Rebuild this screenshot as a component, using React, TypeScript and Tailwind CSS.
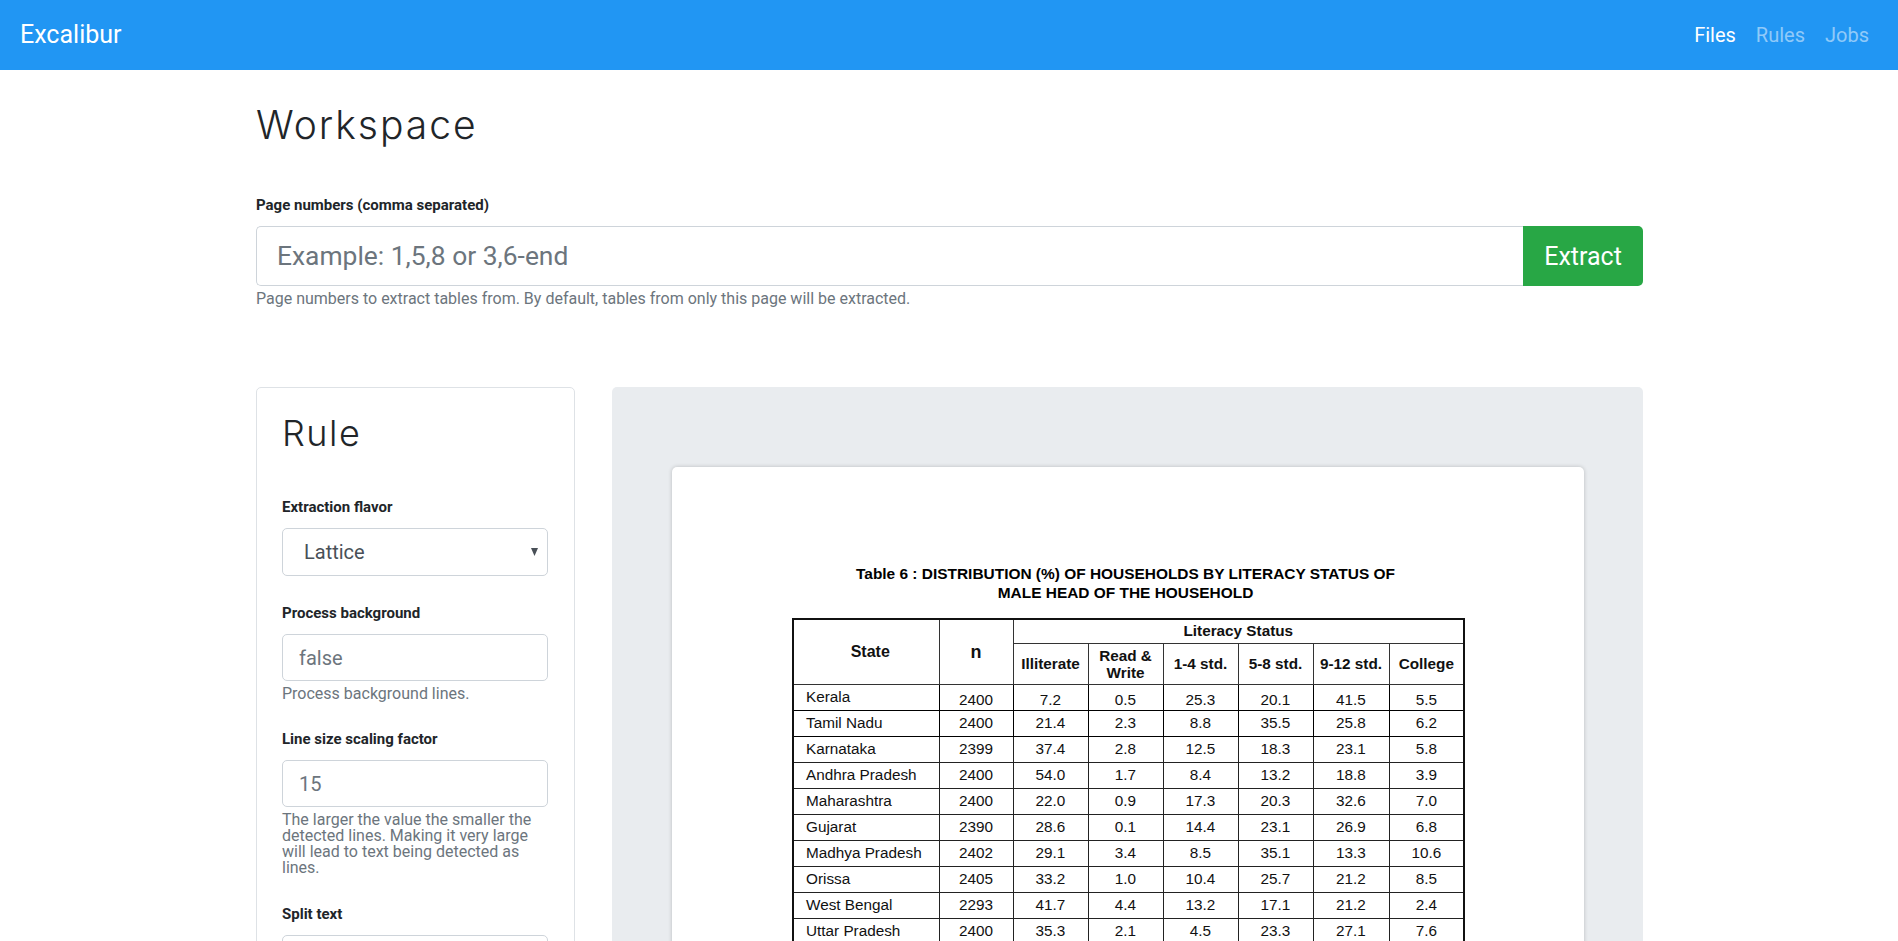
import React from 'react';

const rows = [
  ['Kerala', '2400', '7.2', '0.5', '25.3', '20.1', '41.5', '5.5'],
  ['Tamil Nadu', '2400', '21.4', '2.3', '8.8', '35.5', '25.8', '6.2'],
  ['Karnataka', '2399', '37.4', '2.8', '12.5', '18.3', '23.1', '5.8'],
  ['Andhra Pradesh', '2400', '54.0', '1.7', '8.4', '13.2', '18.8', '3.9'],
  ['Maharashtra', '2400', '22.0', '0.9', '17.3', '20.3', '32.6', '7.0'],
  ['Gujarat', '2390', '28.6', '0.1', '14.4', '23.1', '26.9', '6.8'],
  ['Madhya Pradesh', '2402', '29.1', '3.4', '8.5', '35.1', '13.3', '10.6'],
  ['Orissa', '2405', '33.2', '1.0', '10.4', '25.7', '21.2', '8.5'],
  ['West Bengal', '2293', '41.7', '4.4', '13.2', '17.1', '21.2', '2.4'],
  ['Uttar Pradesh', '2400', '35.3', '2.1', '4.5', '23.3', '27.1', '7.6'],
];

const Field = ({ label, placeholder, help }: { label: string; placeholder: string; help?: string }) => (
  <div className="mb-[27px]">
    <label className="block text-[15px] leading-[21px] font-bold text-[#212529] mb-[10px]">{label}</label>
    <input
      placeholder={placeholder}
      className="block w-full h-[47px] px-[16px] text-[20px] bg-white border border-[#ced4da] rounded-[5px] placeholder:text-[#6c757d]"
    />
    {help && <p className="mt-[5px] text-[16px] leading-[16px] text-[#6c757d]">{help}</p>}
  </div>
);

const PdfTable = () => (
  <table className="table-fixed border-collapse border-2 border-[#111] w-[671px] ml-[120px] font-['Liberation_Sans',sans-serif] text-[15.3px] leading-[18px] text-[#111]">
    <colgroup>
      <col className="w-[146px]" />
      <col className="w-[74px]" />
      <col className="w-[75px]" />
      <col className="w-[75px]" />
      <col className="w-[75px]" />
      <col className="w-[75px]" />
      <col className="w-[76px]" />
      <col className="w-[75px]" />
    </colgroup>
    <thead className="font-bold">
      <tr className="h-[24px]">
        <th rowSpan={2} className="border border-[#333] text-[16px] pl-[8px]">State</th>
        <th rowSpan={2} className="border border-[#333] text-[18px]">n</th>
        <th colSpan={6} className="border border-[#333]">Literacy Status</th>
      </tr>
      <tr className="h-[41px]">
        {['Illiterate', 'Read & Write', '1-4 std.', '5-8 std.', '9-12 std.', 'College'].map((h) => (
          <th key={h} className="border border-[#333] px-[6px] leading-[17px]">{h}</th>
        ))}
      </tr>
    </thead>
    <tbody>
      {rows.map((r, ri) => (
        <tr key={r[0]} className={ri === 0 ? 'h-[26px]' : 'h-[26px]'}>
          {r.map((c, i) => (
            <td
              key={i}
              className={`border ${ri < 2 ? 'border-black' : 'border-[#222]'} ${i === 0 ? 'pl-[12px] text-left' : 'text-center'} ${ri === 0 && i > 0 ? 'pt-[5px]' : ''}`}
            >
              {c}
            </td>
          ))}
        </tr>
      ))}
    </tbody>
  </table>
);

const App = () => {
  return (
    <div className="h-[941px] overflow-hidden bg-white font-[Roboto,sans-serif] text-[#212529]">
      {/* Navbar */}
      <nav className="h-[70px] bg-[#2196f3] flex items-center justify-between pl-[20px] pr-[29px]">
        <a className="text-[25px] text-white">Excalibur</a>
        <div className="flex gap-[20px] text-[20px]">
          <a className="text-white">Files</a>
          <a className="text-white/50">Rules</a>
          <a className="text-white/50">Jobs</a>
        </div>
      </nav>

      <main className="w-[1387px] ml-[256px]">
        <h1 className="mt-[31px] text-[39px] leading-[48px] tracking-[2px] font-light font-[Inter,sans-serif] text-[#212529]">Workspace</h1>

        {/* Page numbers */}
        <div className="mt-[46px]">
          <label className="block text-[15px] leading-[21px] font-bold mb-[10px]">Page numbers (comma separated)</label>
          <div className="flex h-[60px]">
            <input
              placeholder="Example: 1,5,8 or 3,6-end"
              className="flex-1 pl-[20px] pr-[21px] pt-[2px] text-[26.4px] border border-[#ced4da] border-r-0 rounded-l-[5px] placeholder:text-[#6c757d]"
            />
            <button className="w-[120px] pt-[2px] bg-[#28a745] text-white text-[25px] rounded-r-[5px]">Extract</button>
          </div>
          <p className="mt-[1px] text-[16px] leading-[24px] text-[#6c757d]">Page numbers to extract tables from. By default, tables from only this page will be extracted.</p>
        </div>

        <div className="mt-[76px] flex gap-[37px] items-start">
          {/* Rule card */}
          <aside className="w-[319px] shrink-0 border border-[#dee2e6] rounded-[5px] pl-[25px] pr-[26px] pt-[24px]">
            <h2 className="text-[36px] leading-[43px] tracking-[1.5px] font-light font-[Inter,sans-serif] mb-[42px]">Rule</h2>
            <div className="mb-[27px]">
              <label className="block text-[15px] leading-[21px] font-bold mb-[10px]">Extraction flavor</label>
              <div className="relative h-[48px] flex items-center pl-[21px] border border-[#ced4da] rounded-[5px] text-[20px] text-[#495057]">
                Lattice
                <svg className="absolute right-[9px] top-[19px] w-[7px] h-[8px]" viewBox="0 0 7 8">
                  <path d="M0 0h7L3.5 8z" fill="#495057" />
                </svg>
              </div>
            </div>
            <Field label="Process background" placeholder="false" help="Process background lines." />
            <Field
              label="Line size scaling factor"
              placeholder="15"
              help="The larger the value the smaller the detected lines. Making it very large will lead to text being detected as lines."
            />
            <div className="pt-[1px]">
              <Field label="Split text" placeholder="false" />
            </div>
          </aside>

          {/* Preview */}
          <section className="flex-1 bg-[#e9ecef] rounded-[5px] pl-[60px] pr-[59px] pt-[80px] h-[700px]">
            <div className="bg-white rounded-[5px] shadow-[0_0_4px_rgba(0,0,0,0.2)] pt-[97px] h-[600px]">
              <p className="text-center pr-[5px] font-['Liberation_Sans',sans-serif] text-[15.45px] leading-[19px] font-bold text-black mb-[16px]">
                Table 6 : DISTRIBUTION (%) OF HOUSEHOLDS BY LITERACY STATUS OF
                <br />
                MALE HEAD OF THE HOUSEHOLD
              </p>
              <PdfTable />
            </div>
          </section>
        </div>
      </main>
    </div>
  );
};

export default App;
